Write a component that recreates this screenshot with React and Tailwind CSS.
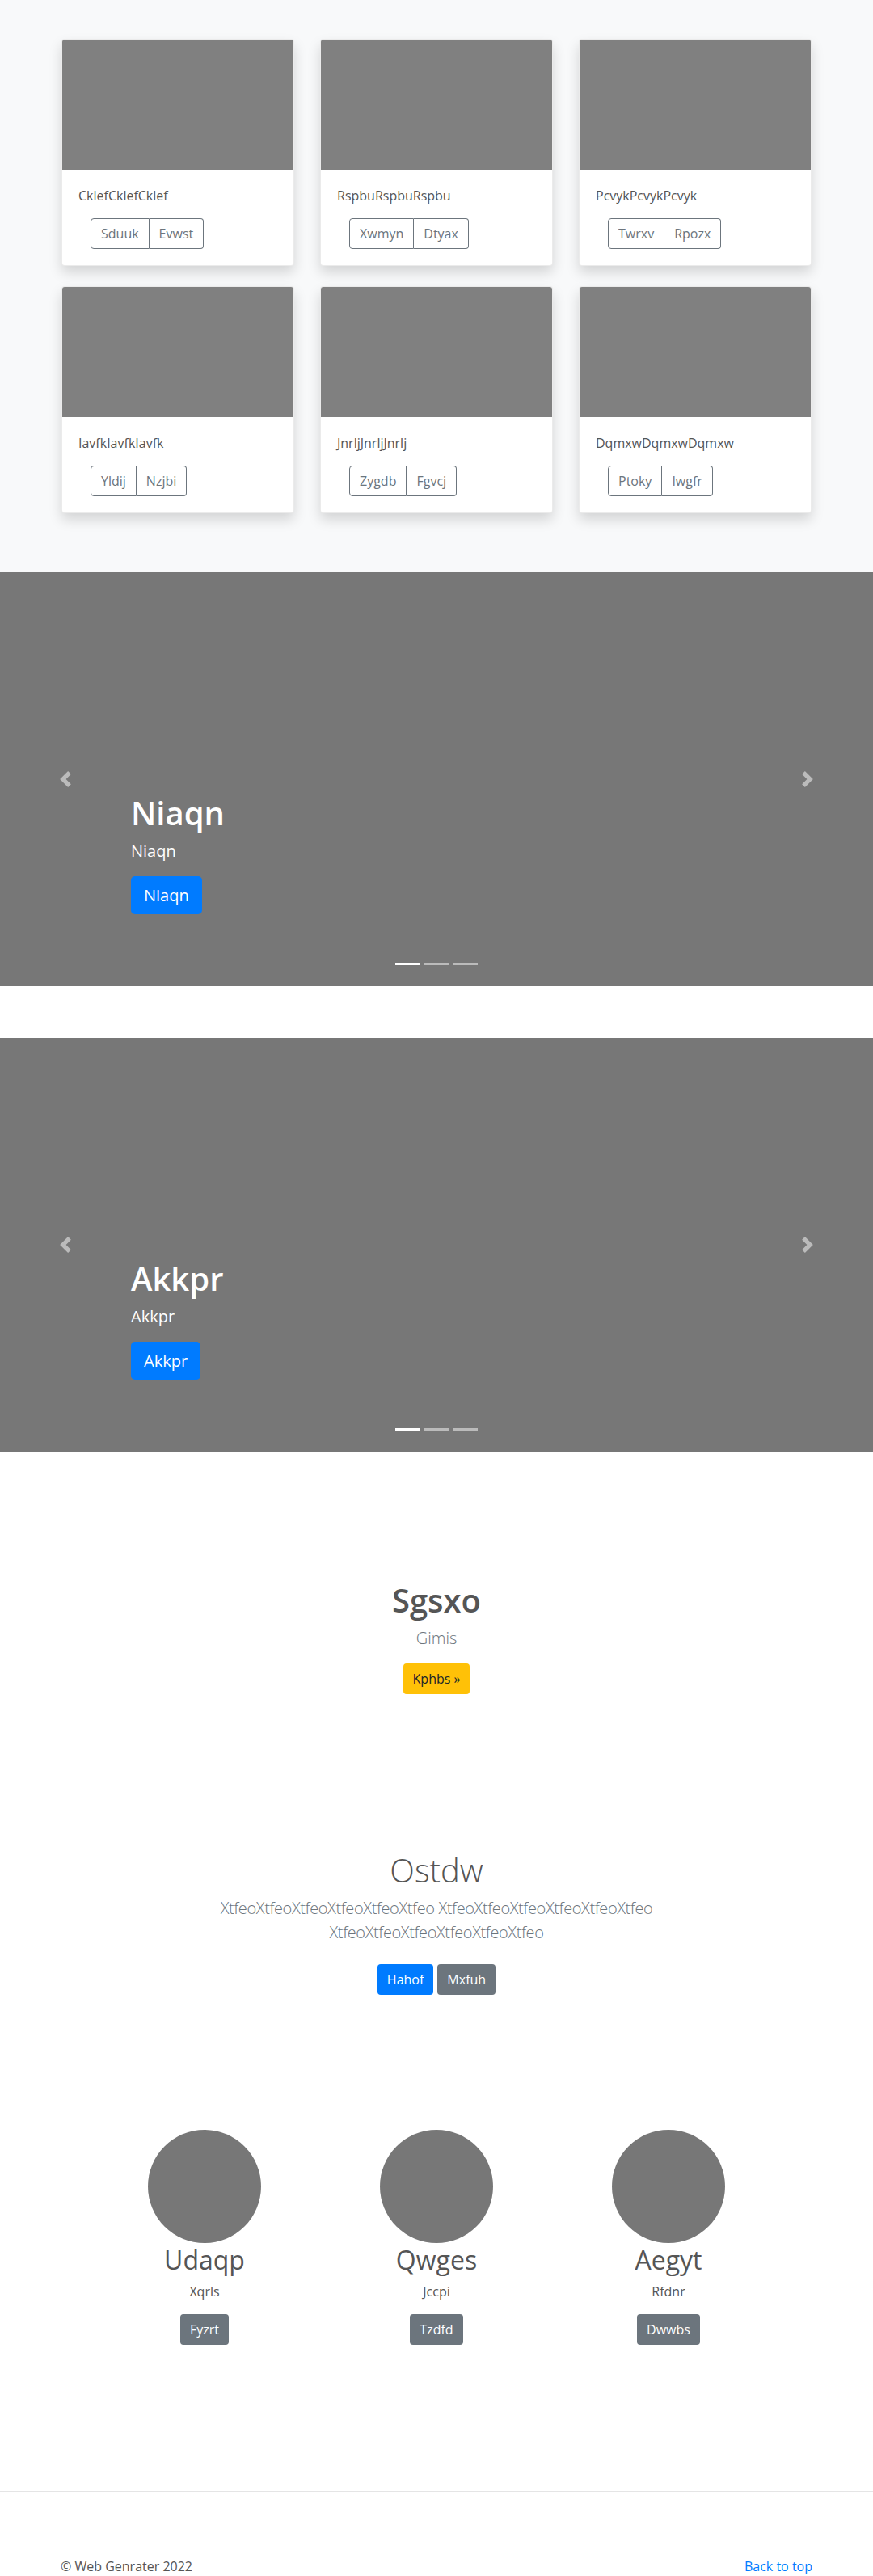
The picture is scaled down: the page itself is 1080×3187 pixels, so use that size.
import React from "react";

const FONT = "font-['Segoe_UI','Open_Sans','Noto_Sans',sans-serif]";

const cards = [
  { t: "CklefCklefCklef", b: ["Sduuk", "Evwst"] },
  { t: "RspbuRspbuRspbu", b: ["Xwmyn", "Dtyax"] },
  { t: "PcvykPcvykPcvyk", b: ["Twrxv", "Rpozx"] },
  { t: "IavfkIavfkIavfk", b: ["Yldij", "Nzjbi"] },
  { t: "JnrljJnrljJnrlj", b: ["Zygdb", "Fgvcj"] },
  { t: "DqmxwDqmxwDqmxw", b: ["Ptoky", "Iwgfr"] },
];

const team = [
  { n: "Udaqp", s: "Xqrls", b: "Fyzrt" },
  { n: "Qwges", s: "Jccpi", b: "Tzdfd" },
  { n: "Aegyt", s: "Rfdnr", b: "Dwwbs" },
];

function Card({ t, b }) {
  return (
    <div className="bg-white rounded border border-[rgba(0,0,0,0.08)] shadow-[0_8px_16px_rgba(0,0,0,0.15)] overflow-hidden">
      <div className="h-[161px] bg-[#808080]" />
      <div className="p-5">
        <p className="text-[16px] leading-6 mb-4 text-[#555]">{t}</p>
        <div className="ml-[15px] inline-flex">
          <span className="px-3 h-[38px] flex items-center text-[16px] text-[#6c757d] border border-[#6c757d] rounded-l">
            {b[0]}
          </span>
          <span className="px-3 h-[38px] flex items-center text-[16px] text-[#6c757d] border border-[#6c757d] border-l-0 rounded-r">
            {b[1]}
          </span>
        </div>
      </div>
    </div>
  );
}

function Carousel({ label, className }) {
  return (
    <div className={"relative h-[512px] bg-[#777] " + className}>
      <div className="absolute top-0 bottom-0 left-0 w-[15%] flex items-center justify-center opacity-50">
        <svg viewBox="0 0 8 8" className="w-5 h-5" fill="#fff">
          <path d="M5.25 0l-4 4 4 4 1.5-1.5L4.25 4l2.5-2.5L5.25 0z" />
        </svg>
      </div>
      <div className="absolute top-0 bottom-0 right-0 w-[15%] flex items-center justify-center opacity-50">
        <svg viewBox="0 0 8 8" className="w-5 h-5" fill="#fff">
          <path d="M2.75 0l-1.5 1.5L3.75 4l-2.5 2.5L2.75 8l4-4-4-4z" />
        </svg>
      </div>
      <div className="absolute left-[15%] right-[15%] bottom-[89px] text-white">
        <h1 className="text-[40px] leading-[48px] font-semibold mb-2">{label}</h1>
        <p className="text-[20px] leading-[30px] mb-4">{label}</p>
        <span className="inline-flex items-center h-[47px] px-4 rounded-[5px] bg-[#007bff] text-[20px] text-white">
          {label}
        </span>
      </div>
      <div className="absolute left-0 right-0 bottom-[26px] flex justify-center gap-[6px]">
        <span className="w-[30px] h-[3px] bg-white" />
        <span className="w-[30px] h-[3px] bg-white opacity-50" />
        <span className="w-[30px] h-[3px] bg-white opacity-50" />
      </div>
    </div>
  );
}

export default function App() {
  return (
    <div className={FONT + " bg-white text-[#555] w-[1080px]"}>
      <section className="bg-[#f8f9fa] pt-12 pb-[73px]">
        <div className="w-[928px] mx-auto grid grid-cols-3 gap-x-8 gap-y-[25px]">
          {cards.map((c) => (
            <Card key={c.t} {...c} />
          ))}
        </div>
      </section>

      <Carousel label="Niaqn" className="mb-16" />
      <Carousel label="Akkpr" className="" />

      <section className="pt-[160px] text-center">
        <h2 className="text-[40px] leading-[48px] font-semibold text-[#555] mb-2">Sgsxo</h2>
        <p className="text-[20px] leading-[30px] font-light text-[#6c757d] mb-4">Gimis</p>
        <span className="inline-flex items-center h-[38px] px-3 rounded bg-[#ffc107] text-[16px] text-[#212529]">
          Kphbs »
        </span>
      </section>

      <section className="pt-[194px] text-center">
        <h1 className="text-[40px] leading-[48px] font-light text-[#555] mb-2">Ostdw</h1>
        <p className="w-[610px] mx-auto text-[20px] leading-[30px] font-light tracking-[-0.02em] text-[#6c757d] mb-6">
          XtfeoXtfeoXtfeoXtfeoXtfeoXtfeo XtfeoXtfeoXtfeoXtfeoXtfeoXtfeo XtfeoXtfeoXtfeoXtfeoXtfeoXtfeo
        </p>
        <div className="flex justify-center gap-[5px]">
          <span className="inline-flex items-center h-[38px] px-3 rounded bg-[#007bff] text-[16px] text-white">
            Hahof
          </span>
          <span className="inline-flex items-center h-[38px] px-3 rounded bg-[#6c757d] text-[16px] text-white">
            Mxfuh
          </span>
        </div>
      </section>

      <section className="pt-[167px]">
        <div className="w-[861px] mx-auto grid grid-cols-3 text-center">
          {team.map((m) => (
            <div key={m.n} className="flex flex-col items-center">
              <div className="w-[140px] h-[140px] rounded-full bg-[#777]" />
              <h2 className="mt-[2px] text-[32px] leading-[38px] font-normal text-[#555] mb-2">{m.n}</h2>
              <p className="text-[16px] leading-6 text-[#555] mb-4">{m.s}</p>
              <span className="inline-flex items-center h-[38px] px-3 rounded bg-[#6c757d] text-[16px] text-white">
                {m.b}
              </span>
            </div>
          ))}
        </div>
      </section>

      <hr className="mt-[181px] border-0 border-t border-[rgba(0,0,0,0.1)]" />

      <footer className="w-[960px] mx-auto px-[15px] pt-[80px] flex justify-between text-[16px] leading-6">
        <p className="text-[#555]">© Web Genrater 2022</p>
        <a href="#" className="text-[#007bff]">Back to top</a>
      </footer>
    </div>
  );
}
